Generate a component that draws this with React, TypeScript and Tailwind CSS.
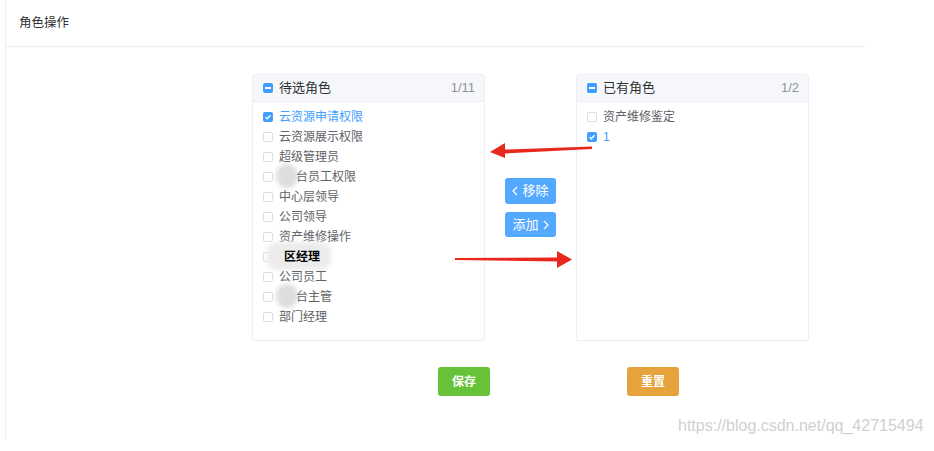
import React from 'react';

const font = "font-['Liberation_Sans','Noto_Sans_CJK_SC',sans-serif]";

const leftItems = [
  { label: '云资源申请权限', checked: true },
  { label: '云资源展示权限' },
  { label: '超级管理员' },
  { label: '台员工权限', blurPrefix: true },
  { label: '中心层领导' },
  { label: '公司领导' },
  { label: '资产维修操作' },
  { label: '区经理', masked: true },
  { label: '公司员工' },
  { label: '台主管', blurPrefix: true },
  { label: '部门经理' },
];

const rightItems = [{ label: '资产维修鉴定' }, { label: '1', checked: true }];

function Box({ state }: { state?: 'checked' | 'half' }) {
  if (state === 'checked') {
    return (
      <span className="w-[10px] h-[10px] rounded-[2px] bg-[#409eff] flex items-center justify-center">
        <svg width="8" height="8" viewBox="0 0 8 8">
          <path d="M1.5 4.2 L3.3 5.8 L6.5 2.3" stroke="white" strokeWidth="1.3" fill="none" />
        </svg>
      </span>
    );
  }
  if (state === 'half') {
    return (
      <span className="w-[10px] h-[10px] rounded-[2px] bg-[#409eff] flex items-center justify-center">
        <span className="w-[6px] h-[1.5px] bg-white" />
      </span>
    );
  }
  return <span className="w-[10px] h-[10px] rounded-[2px] border border-[#dcdfe6] bg-white" />;
}

function Chevron({ dir }: { dir: 'left' | 'right' }) {
  return (
    <svg width="6" height="10" viewBox="0 0 6 10">
      <path
        d={dir === 'left' ? 'M5 1 L1 5 L5 9' : 'M1 1 L5 5 L1 9'}
        stroke="white"
        strokeWidth="1.2"
        fill="none"
      />
    </svg>
  );
}

type Item = { label: string; checked?: boolean; blurPrefix?: boolean; masked?: boolean };

function Panel({ title, count, items }: { title: string; count: string; items: Item[] }) {
  return (
    <div className="w-[233px] h-[267px] border border-[#ebeef5] rounded-[3px] bg-white flex flex-col">
      <div className="h-[27px] bg-[#f5f7fa] border-b border-[#ebeef5] flex items-center pl-[10px] pr-[9px]">
        <Box state="half" />
        <span className="ml-[6px] text-[13px] text-[#303133]">{title}</span>
        <span className="ml-auto text-[13px] text-[#909399]">{count}</span>
      </div>
      <div className="pt-[5px] flex flex-col">
        {items.map((it, i) => (
          <div key={i} className="h-[20px] flex items-center pl-[10px]">
            <Box state={it.checked ? 'checked' : undefined} />
            <span
              className={`relative text-[12px] ${it.checked ? 'text-[#409eff]' : 'text-[#606266]'} ${
                it.blurPrefix ? 'ml-[23px]' : 'ml-[6px]'
              }`}
            >
              {it.blurPrefix && (
                <span className="absolute left-[-20px] top-[-4px] w-[22px] h-[24px] rounded-full bg-[#dedede] blur-[2px]" />
              )}
              {it.masked ? (
                <span className="relative inline-block">
                  <span className="absolute left-[-12px] top-[-6px] w-[64px] h-[28px] rounded-[10px] bg-[#ececec] blur-[2px]" />
                  <span className="relative ml-[5px] text-black font-bold">{it.label}</span>
                </span>
              ) : (
                <span className="relative">{it.label}</span>
              )}
            </span>
          </div>
        ))}
      </div>
    </div>
  );
}

export default function App() {
  return (
    <div className={`w-[934px] h-[451px] bg-white relative overflow-hidden ${font}`}>
      <div className="ml-[5px] w-[860px] h-[440px] border-l border-[#ebeef5]">
        <div className="h-[47px] border-b border-[#ebeef5] flex items-center pl-[13px]">
          <span className="text-[12.5px] text-[#303133]">角色操作</span>
        </div>
        <div className="pt-[27px] pl-[246px] flex items-center">
          <Panel title="待选角色" count="1/11" items={leftItems} />
          <div className="mx-[20px] flex flex-col gap-[8px]">
            <button className="w-[51px] h-[26px] rounded-[3px] bg-[#53a8ff] text-white text-[13px] flex items-center justify-center gap-[4px]">
              <Chevron dir="left" />
              移除
            </button>
            <button className="w-[51px] h-[25px] rounded-[3px] bg-[#53a8ff] text-white text-[13px] flex items-center justify-center gap-[4px]">
              添加
              <Chevron dir="right" />
            </button>
          </div>
          <Panel title="已有角色" count="1/2" items={rightItems} />
        </div>
        <div className="mt-[26px] flex">
          <button className="ml-[432px] w-[52px] h-[29px] rounded-[3px] bg-[#67c23a] text-white text-[12px] font-bold">
            保存
          </button>
          <button className="ml-[137px] w-[52px] h-[29px] rounded-[3px] bg-[#e6a23c] text-white text-[12px] font-bold">
            重置
          </button>
        </div>
      </div>

      <svg className="absolute left-0 top-0 pointer-events-none" width="934" height="451">
        <path d="M592 146.5 L505 149.5 L505 143 L490 152 L505 158 L505 153.5 L592 149 Z" fill="#e8271d" />
        <path d="M455 258 L557 257.5 L557 251 L572 259.5 L557 268 L557 261.5 L455 260 Z" fill="#e8271d" />
      </svg>

      <div className="absolute left-[678px] top-[414px] text-[16px] text-[#d0d0d0] font-['Liberation_Sans',sans-serif]">
        https://blog.csdn.net/qq_42715494
      </div>
    </div>
  );
}
